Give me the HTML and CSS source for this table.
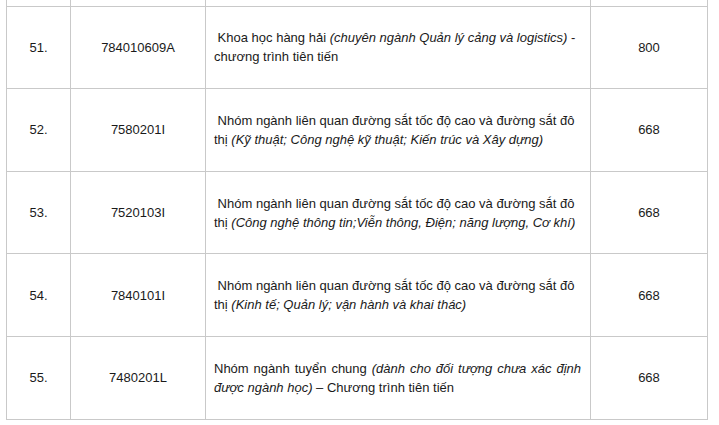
FILE: index.html
```html
<!DOCTYPE html>
<html lang="vi">
<head>
<meta charset="utf-8">
<link rel="stylesheet" href="styles.css">
</head>
<body>
<table class="grid">
  <colgroup>
    <col class="c-no"><col class="c-code"><col class="c-name"><col class="c-score">
  </colgroup>
  <tbody>
    <tr class="prev"><td></td><td></td><td></td><td></td></tr>
    <tr>
      <td class="ctr">51.</td>
      <td class="ctr">784010609A</td>
      <td class="name">&nbsp;Khoa học hàng hải <i>(chuyên ngành Quản lý cảng và logistics)</i> - chương trình tiên tiến</td>
      <td class="ctr">800</td>
    </tr>
    <tr>
      <td class="ctr">52.</td>
      <td class="ctr">7580201I</td>
      <td class="name">&nbsp;Nhóm ngành liên quan đường sắt tốc độ cao và đường sắt đô thị <i>(Kỹ thuật; Công nghệ kỹ thuật; Kiến trúc và Xây dựng)</i></td>
      <td class="ctr">668</td>
    </tr>
    <tr>
      <td class="ctr">53.</td>
      <td class="ctr">7520103I</td>
      <td class="name">&nbsp;Nhóm ngành liên quan đường sắt tốc độ cao và đường sắt đô thị <i>(Công nghệ thông tin;Viễn thông, Điện; năng lượng, Cơ khí)</i></td>
      <td class="ctr">668</td>
    </tr>
    <tr>
      <td class="ctr">54.</td>
      <td class="ctr">7840101I</td>
      <td class="name">&nbsp;Nhóm ngành liên quan đường sắt tốc độ cao và đường sắt đô thị <i>(Kinh tế; Quản lý; vận hành và khai thác)</i></td>
      <td class="ctr">668</td>
    </tr>
    <tr>
      <td class="ctr">55.</td>
      <td class="ctr">7480201L</td>
      <td class="name just">Nhóm ngành tuyển chung <i>(dành cho đối tượng chưa xác định được ngành học)</i> – Chương trình tiên tiến</td>
      <td class="ctr">668</td>
    </tr>
  </tbody>
</table>
</body>
</html>
```

FILE: styles.css
```css
html, body {
  margin: 0;
  padding: 0;
  background: #ffffff;
}
body {
  font-family: "Liberation Sans", Arial, sans-serif;
  font-size: 13px;
  color: #1a1a1a;
  overflow: hidden;
}
.grid {
  border-collapse: collapse;
  table-layout: fixed;
  width: 702px;
  margin: -77px 0 0 6px;
}
.c-no { width: 64px; }
.c-code { width: 135px; }
.c-name { width: 385px; }
.c-score { width: 117px; }
.grid td {
  border: 1px solid #c9c9c9;
  height: 81.6px;
  padding: 0 9px 0 8px;
  line-height: 19px;
  vertical-align: middle;
}
.grid .ctr {
  text-align: center;
  padding: 0;
}
.grid .name {
  text-align: left;
}
.grid .just {
  text-align: justify;
}
```
